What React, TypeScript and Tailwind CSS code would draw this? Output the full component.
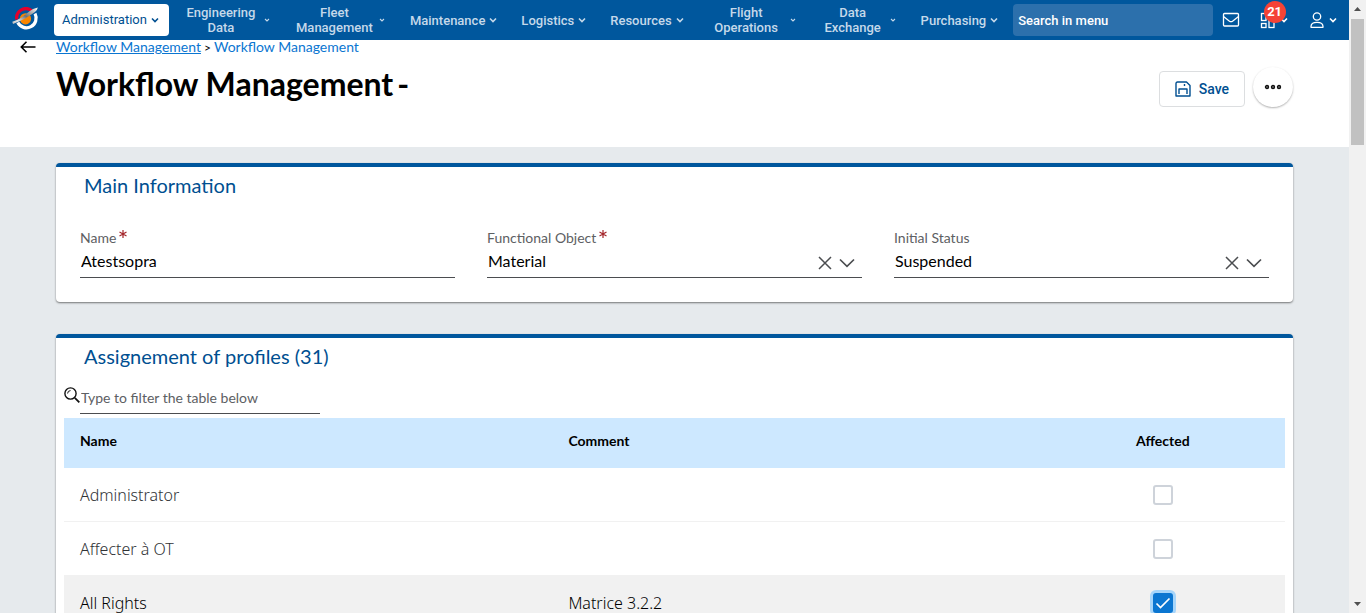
import { useId, useState } from 'react';

const lato = 'font-[Lato,sans-serif]';
const roboto = 'font-[Roboto,sans-serif]';

function Chevron({ className = '' }: { className?: string }) {
  return (
    <svg viewBox="0 0 12 12" fill="none" stroke="currentColor" strokeWidth="1.6" className={`shrink-0 ${className}`} aria-hidden="true">
      <path d="M3 4.5 6 7.5 9 4.5" />
    </svg>
  );
}

const navItems = [
  { label: 'Engineering Data', width: 'w-[76px]', wrap: true },
  { label: 'Fleet Management', width: 'w-[79px]', wrap: true },
  { label: 'Maintenance', width: 'w-auto', wrap: false },
  { label: 'Logistics', width: 'w-auto', wrap: false },
  { label: 'Resources', width: 'w-auto', wrap: false },
  { label: 'Flight Operations', width: 'w-[77px]', wrap: true },
  { label: 'Data Exchange', width: 'w-[64px]', wrap: true },
  { label: 'Purchasing', width: 'w-auto', wrap: false },
];

function Logo() {
  return (
    <svg viewBox="0 0 28 26" className="h-[26px] w-7 shrink-0" aria-hidden="true">
      <defs>
        <linearGradient id="blade" x1="0" y1="1" x2="1" y2="0">
          <stop offset="0" stopColor="#b5b5b5" />
          <stop offset="0.2" stopColor="#e8e8e8" />
          <stop offset="0.5" stopColor="#707070" />
          <stop offset="0.75" stopColor="#b8b8b8" />
          <stop offset="1" stopColor="#ffffff" />
        </linearGradient>
      </defs>
      <circle cx="13.500" cy="11.800" r="5.600" fill="#f98500" />
      <path d="M4.800 12.500A9.300 9.300 0 0 1 20 3.900" fill="none" stroke="#e4002b" strokeWidth="3.200" />
      <path d="M23 6.500A9.400 9.400 0 0 1 5.800 15.600" fill="none" stroke="#fff" strokeWidth="3.200" />
      <path d="M0.300 14.800C7 12.500 12 9 17.500 4.200Q20.500 1.500 25.800 0.500Q25.500 3 23 5C17 9.500 10 13.500 1 17Z" fill="url(#blade)" />
    </svg>
  );
}

function TopBar() {
  return (
    <header className={`flex h-10 shrink-0 items-center bg-[#00579d] pl-3 text-[13px] font-medium text-[#c5d9ea] ${roboto}`}>
      <Logo />
      <nav className="ml-[14px] flex items-center gap-[6px]">
        <button className="flex h-8 items-center gap-[2px] rounded bg-white px-2 font-normal text-[#004f91]">
          <span>Administration</span>
          <Chevron className="size-3" />
        </button>
        {navItems.map((item) => (
          <button key={item.label} className="flex h-8 items-center gap-[2px] px-2 leading-[15px]">
            <span className={`text-center ${item.width}`}>{item.label}</span>
            <Chevron className={item.wrap ? 'mx-[2px] size-2' : 'size-3'} />
          </button>
        ))}
      </nav>
      <input
        type="text"
        aria-label="Search in menu"
        placeholder="Search in menu"
        className="ml-[5px] h-8 w-[200px] rounded bg-[#2c70ac] px-[5px] text-white outline-none placeholder:text-white"
      />
      <div className="ml-[9px] flex flex-1 items-center justify-between pr-[10px] text-white">
        <button aria-label="Messages">
          <svg viewBox="0 0 18 16" fill="none" stroke="currentColor" strokeWidth="1.3" strokeLinejoin="round" className="h-4 w-[18px]">
            <rect x="1.500" y="1.500" width="15" height="12.500" rx="1" />
            <path d="M1.500 4.500 7.500 9.200Q9 10.200 10.500 9.200L16.500 4.500" />
          </svg>
        </button>
        <button aria-label="Applications" className="relative flex items-center gap-[2px]">
          <svg viewBox="0 0 16 18" fill="none" stroke="currentColor" strokeWidth="1.3" className="h-[18px] w-4">
            <rect x="1.500" y="2.500" width="4.500" height="7" />
            <rect x="1.500" y="12.500" width="4.500" height="4" />
            <rect x="9" y="2.500" width="5" height="4" />
            <rect x="9" y="9.500" width="5" height="7" />
          </svg>
          <Chevron className="size-3" />
          <span className="absolute -top-[10px] left-1 flex size-[22px] items-center justify-center rounded-full bg-[#f44336] text-[13px] font-bold">21</span>
        </button>
        <button aria-label="Account" className="flex items-center gap-[2px]">
          <svg viewBox="0 0 16 18" fill="none" stroke="currentColor" strokeWidth="1.3" className="h-[18px] w-4">
            <circle cx="8" cy="5.500" r="3.700" />
            <path d="M2 16.300V15.500C2 12.500 4.500 11.400 8 11.400S14 12.500 14 15.500V16.300Z" strokeLinejoin="round" />
          </svg>
          <Chevron className="size-3" />
        </button>
      </div>
    </header>
  );
}

function PageHeader() {
  return (
    <div className="flex h-[107px] shrink-0 bg-white">
      <button aria-label="Back" className="ml-5 flex h-[14px] w-9 items-center">
        <svg viewBox="0 0 16 14" fill="none" stroke="#000" strokeWidth="1.6" className="h-[14px] w-4">
          <path d="M15.500 7H1.500M6.500 1.800 1.300 7 6.500 12.200" />
        </svg>
      </button>
      <div className="flex-1">
        <div className="text-sm leading-[10px] text-[#0b76d1]">
          <a href="#workflows" className="underline">Workflow Management</a>
          <span className="px-[3px] text-xs text-black">&gt;</span>
          <a href="#workflow">Workflow Management</a>
        </div>
        <h1 className="mt-2 flex gap-1 text-[32px] leading-10 font-bold text-black">
          <span>Workflow Management</span>
          <span>-</span>
        </h1>
      </div>
      <div className="mr-14 flex items-start gap-2 pt-[27px]">
        <button className={`mt-1 flex h-9 items-center gap-2 rounded border border-[#dcdee0] px-[15px] text-sm font-medium text-[#004f91] ${roboto}`}>
          <svg viewBox="0 0 16 16" fill="none" stroke="currentColor" strokeWidth="1.4" strokeLinejoin="round" className="size-4">
            <path d="M1 2.500Q1 1 2.500 1H11.500L15 4.500V15H1Z" />
            <path d="M4 13V8H12V13M9.500 3V5" />
          </svg>
          Save
        </button>
        <button aria-label="More actions" className="flex size-10 items-center justify-center rounded-full bg-white shadow-[0_1px_2px_rgba(0,0,0,0.3)]">
          <svg viewBox="0 0 18 6" fill="#999" stroke="#111" strokeWidth="1.400" className="h-[6px] w-[18px]">
            <circle cx="3" cy="3" r="1.500" />
            <circle cx="9" cy="3" r="1.500" />
            <circle cx="15" cy="3" r="1.500" />
          </svg>
        </button>
      </div>
    </div>
  );
}

function FieldLabel({ id, text, required }: { id: string; text: string; required?: boolean }) {
  return (
    <label htmlFor={id} className="flex gap-[3px] text-sm leading-5 text-[#5d6063]">
      {text}
      {required && (
        <svg viewBox="0 0 8 8" stroke="#a4262c" strokeWidth="1.200" className="mt-[2px] size-2" role="img" aria-label="required">
          <path d="M4 0V8M0.500 2 7.500 6M7.500 2 0.500 6" />
        </svg>
      )}
    </label>
  );
}

function SelectField({ label, options, required }: { label: string; options: string[]; required?: boolean }) {
  const id = useId();
  const [value, setValue] = useState(options[1]);
  return (
    <div>
      <FieldLabel id={id} text={label} required={required} />
      <div className="flex h-[30px] items-center border-b border-[#4b4d50] pr-[7px]">
        <select id={id} value={value} onChange={(e) => setValue(e.target.value)} className="h-7 flex-1 appearance-none bg-transparent pb-1 pl-px text-base text-black outline-none">
          {options.map((o) => (
            <option key={o}>{o}</option>
          ))}
        </select>
        <button aria-label={`Clear ${label}`} onClick={() => setValue(options[0])} className="mr-[7px]">
          <svg viewBox="0 0 14 14" stroke="#4b4d50" strokeWidth="1.500" className="size-[14px]">
            <path d="M1 1 13 13M13 1 1 13" />
          </svg>
        </button>
        <svg viewBox="0 0 16 14" fill="none" stroke="#4b4d50" strokeWidth="1.700" className="h-[14px] w-4" aria-hidden="true">
          <path d="M1 3.500 8 10.300 15 3.500" />
        </svg>
      </div>
    </div>
  );
}

function Card({ title, children }: { title: string; children: React.ReactNode }) {
  return (
    <section className="rounded border-t-4 border-[#00579d] bg-white shadow-[0_1px_2px_rgba(0,0,0,0.5)]">
      <h2 className="px-7 pt-1 text-xl leading-7 text-[#004f91]">{title}</h2>
      {children}
    </section>
  );
}

const profiles = [
  { name: 'Administrator', comment: '', affected: false },
  { name: 'Affecter à OT', comment: '', affected: false },
  { name: 'All Rights', comment: 'Matrice 3.2.2', affected: true },
];

function ProfileTable() {
  return (
    <table className="w-full table-fixed border-separate border-spacing-0 text-left">
      <thead>
        <tr className="h-[50px] bg-[#cde8ff] text-sm text-black">
          <th className="w-2/5 px-4 pb-1 font-bold">Name</th>
          <th className="w-2/5 px-4 pb-1 font-bold">Comment</th>
          <th className="w-1/5 px-4 pb-1 text-center font-bold">Affected</th>
        </tr>
      </thead>
      <tbody className="font-['Noto_Sans',sans-serif] text-base font-light">
        {profiles.map((p) => (
          <tr key={p.name} className={p.affected ? 'h-[54px] bg-[#f1f1f1] text-black' : 'h-[54px] text-[#303336]'}>
            <td className="border-b border-[#f1f1f1] px-4 pt-px">{p.name}</td>
            <td className="border-b border-[#f1f1f1] px-4 pt-px">{p.comment}</td>
            <td className="border-b border-[#f1f1f1] px-4">
              <label className="relative mx-auto block size-5">
                <input
                  type="checkbox"
                  aria-label={`Affected: ${p.name}`}
                  defaultChecked={p.affected}
                  className="peer block size-5 appearance-none rounded-[3px] border-2 border-[#ced3da] bg-white outline-none checked:border-[#0b76d1] checked:bg-[#0b76d1] checked:shadow-[0_0_0_3px_#a6d5fa]"
                />
                <svg viewBox="0 0 20 20" fill="none" stroke="#fff" strokeWidth="1.700" className="pointer-events-none absolute inset-0 hidden size-5 peer-checked:block">
                  <path d="M3.500 10.500 7.500 14.500 16.500 5.500" />
                </svg>
              </label>
            </td>
          </tr>
        ))}
      </tbody>
    </table>
  );
}

function Scrollbar() {
  return (
    <div className="flex w-[17px] shrink-0 flex-col items-center justify-between bg-[#f1f1f1]" aria-hidden="true">
      <div className="flex w-full flex-col items-center">
        <svg viewBox="0 0 17 19" className="h-[19px] w-full" fill="#505050">
          <path d="M5 11 8.500 7 12 11Z" />
        </svg>
        <div className="h-[126px] w-[13px] bg-[#c1c1c1]" />
      </div>
      <svg viewBox="0 0 17 17" className="h-[17px] w-full" fill="#505050">
        <path d="M5 6 8.500 10 12 6Z" />
      </svg>
    </div>
  );
}

export default function App() {
  const nameId = useId();
  return (
    <div className={`flex h-screen bg-[#e6eaed] ${lato}`}>
      <div className="flex min-w-0 flex-1 flex-col overflow-hidden">
        <TopBar />
        <PageHeader />
        <main className="flex flex-col gap-8 px-14 pt-4">
          <Card title="Main Information">
            <div className="grid grid-cols-3 gap-8 px-6 pt-[29px] pb-6">
              <div>
                <FieldLabel id={nameId} text="Name" required />
                <input id={nameId} defaultValue="Atestsopra" className="block h-[30px] w-full border-b border-[#4b4d50] pb-1 pl-px text-base text-black outline-none" />
              </div>
              <SelectField label="Functional Object" options={['', 'Material']} required />
              <SelectField label="Initial Status" options={['', 'Suspended']} />
            </div>
          </Card>
          <Card title="Assignement of profiles (31)">
            <div className="px-2 pt-3">
              <div className="mb-1 flex h-8 items-start">
                <svg viewBox="0 0 16 16" fill="none" stroke="#111" strokeWidth="1.400" className="mt-[5px] size-4" aria-hidden="true">
                  <circle cx="6.500" cy="6.500" r="5.600" />
                  <path d="M10.800 10.800 15.300 15.300" strokeWidth="1.800" />
                  <path d="M3.600 6.500A3 3 0 0 1 6.500 3.600" strokeWidth="1" />
                </svg>
                <input
                  type="text"
                  aria-label="Filter the table"
                  placeholder="Type to filter the table below"
                  className="h-8 w-60 border-b border-[#4b4d50] pl-px text-sm outline-none placeholder:text-[#5d6063]"
                />
              </div>
              <ProfileTable />
            </div>
          </Card>
        </main>
      </div>
      <Scrollbar />
    </div>
  );
}
